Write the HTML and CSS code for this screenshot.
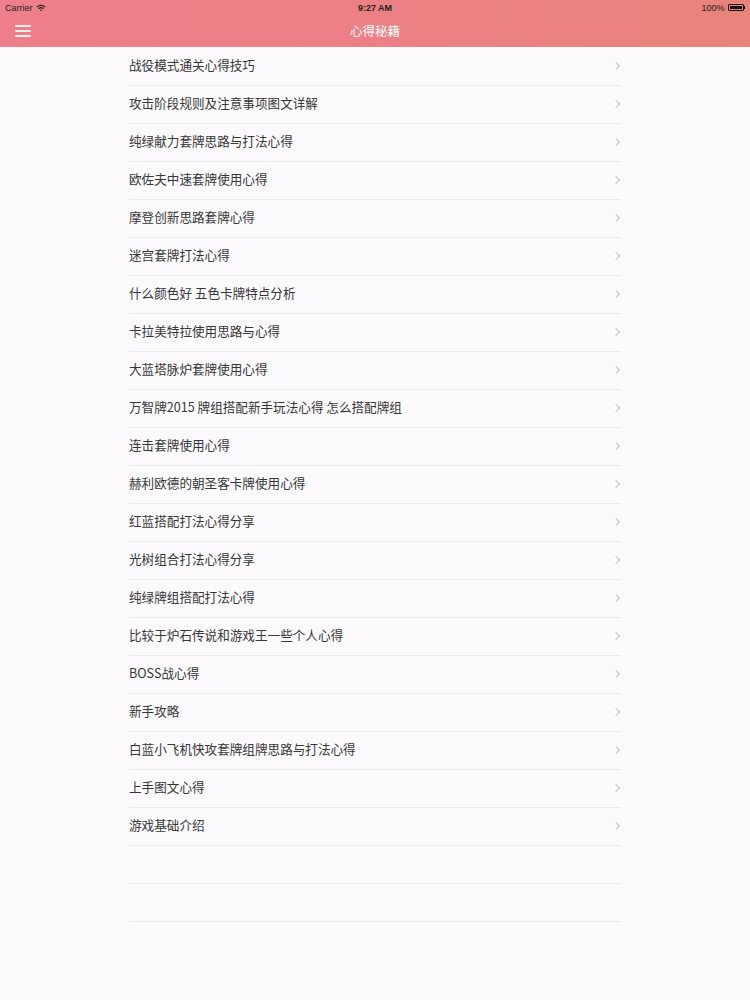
FILE: index.html
```html
<!DOCTYPE html>
<html lang="zh">
<head>
<meta charset="utf-8">
<link rel="stylesheet" href="styles.css">
</head>
<body>
<div class="header">
  <div class="status">
    <div class="carrier">Carrier
      <svg class="wifi" width="10" height="8" viewBox="0 0 10 8"><path d="M0.5 2.6 A6.5 6.5 0 0 1 9.5 2.6 L8.6 3.5 A5.2 5.2 0 0 0 1.4 3.5 Z M2.2 4.3 A4 4 0 0 1 7.8 4.3 L6.9 5.2 A2.7 2.7 0 0 0 3.1 5.2 Z M3.9 6 A1.6 1.6 0 0 1 6.1 6 L5 7.2 Z" fill="#222"/></svg>
    </div>
    <div class="time">9:27 AM</div>
    <div class="battery">100% <span class="batt"><span class="batt-fill"></span></span><span class="batt-tip"></span></div>
  </div>
  <div class="navbar">
    <div class="menu"><span></span><span></span><span></span></div>
    <div class="title">心得秘籍</div>
  </div>
</div>
<ul class="list">
  <li class="row"><span>战役模式通关心得技巧</span><i class="chev"></i></li>
  <li class="row"><span>攻击阶段规则及注意事项图文详解</span><i class="chev"></i></li>
  <li class="row"><span>纯绿献力套牌思路与打法心得</span><i class="chev"></i></li>
  <li class="row"><span>欧佐夫中速套牌使用心得</span><i class="chev"></i></li>
  <li class="row"><span>摩登创新思路套牌心得</span><i class="chev"></i></li>
  <li class="row"><span>迷宫套牌打法心得</span><i class="chev"></i></li>
  <li class="row"><span>什么颜色好 五色卡牌特点分析</span><i class="chev"></i></li>
  <li class="row"><span>卡拉美特拉使用思路与心得</span><i class="chev"></i></li>
  <li class="row"><span>大蓝塔脉炉套牌使用心得</span><i class="chev"></i></li>
  <li class="row"><span>万智牌2015 牌组搭配新手玩法心得 怎么搭配牌组</span><i class="chev"></i></li>
  <li class="row"><span>连击套牌使用心得</span><i class="chev"></i></li>
  <li class="row"><span>赫利欧德的朝圣客卡牌使用心得</span><i class="chev"></i></li>
  <li class="row"><span>红蓝搭配打法心得分享</span><i class="chev"></i></li>
  <li class="row"><span>光树组合打法心得分享</span><i class="chev"></i></li>
  <li class="row"><span>纯绿牌组搭配打法心得</span><i class="chev"></i></li>
  <li class="row"><span>比较于炉石传说和游戏王一些个人心得</span><i class="chev"></i></li>
  <li class="row"><span>BOSS战心得</span><i class="chev"></i></li>
  <li class="row"><span>新手攻略</span><i class="chev"></i></li>
  <li class="row"><span>白蓝小飞机快攻套牌组牌思路与打法心得</span><i class="chev"></i></li>
  <li class="row"><span>上手图文心得</span><i class="chev"></i></li>
  <li class="row"><span>游戏基础介绍</span><i class="chev"></i></li>
  <li class="row empty"></li>
  <li class="row empty"></li>
</ul>
</body>
</html>
```
FILE: styles.css
```css
* { box-sizing: border-box; }
html, body { margin: 0; padding: 0; }
body {
  width: 750px;
  height: 1000px;
  background: #fcfafc;
  font-family: "Noto Sans CJK SC", "Liberation Sans", sans-serif;
  overflow: hidden;
}
.header {
  height: 47px;
  background: linear-gradient(90deg, #ee7f8a 0%, #ec8085 50%, #e8847b 100%);
}
.status {
  height: 15px;
  display: flex;
  align-items: center;
  justify-content: space-between;
  padding: 0 5px;
  font-family: "Liberation Sans", "Noto Sans", sans-serif;
  font-size: 9px;
  color: #222;
  position: relative;
}
.carrier { display: flex; align-items: center; gap: 3px; }
.time {
  position: absolute;
  left: 0; right: 0;
  text-align: center;
  font-weight: bold;
  font-size: 9px;
}
.battery { display: flex; align-items: center; gap: 3px; }
.batt {
  width: 16px; height: 7px;
  border: 1px solid #111;
  border-radius: 1px;
  padding: 1px;
  display: flex;
}
.batt-fill { flex: 1; background: #111; }
.batt-tip { width: 1.5px; height: 3px; background: #111; margin-left: -3px; }
.navbar {
  height: 32px;
  display: flex;
  align-items: center;
  position: relative;
}
.menu {
  margin-left: 15px;
  width: 16px;
  display: flex;
  flex-direction: column;
  gap: 3px;
  margin-top: -1px;
}
.menu span { height: 2px; background: #fdf0f0; border-radius: 1px; }
.title {
  position: absolute;
  left: 0; right: 0;
  text-align: center;
  color: #fff;
  font-size: 12.5px;
  top: 6px;
}
.list {
  list-style: none;
  margin: 0;
  padding: 1px 129px 0;
}
.row {
  height: 38px;
  border-bottom: 1px solid #ecebec;
  display: flex;
  align-items: center;
  justify-content: space-between;
  font-size: 12.6px;
  color: #363636;
  padding-bottom: 5px;
}
.chev {
  width: 6px;
  height: 6px;
  border-top: 1.2px solid #c4c4c8;
  border-right: 1.2px solid #c4c4c8;
  transform: rotate(45deg);
  margin-right: 2px;
  margin-top: 4px;
}
```
